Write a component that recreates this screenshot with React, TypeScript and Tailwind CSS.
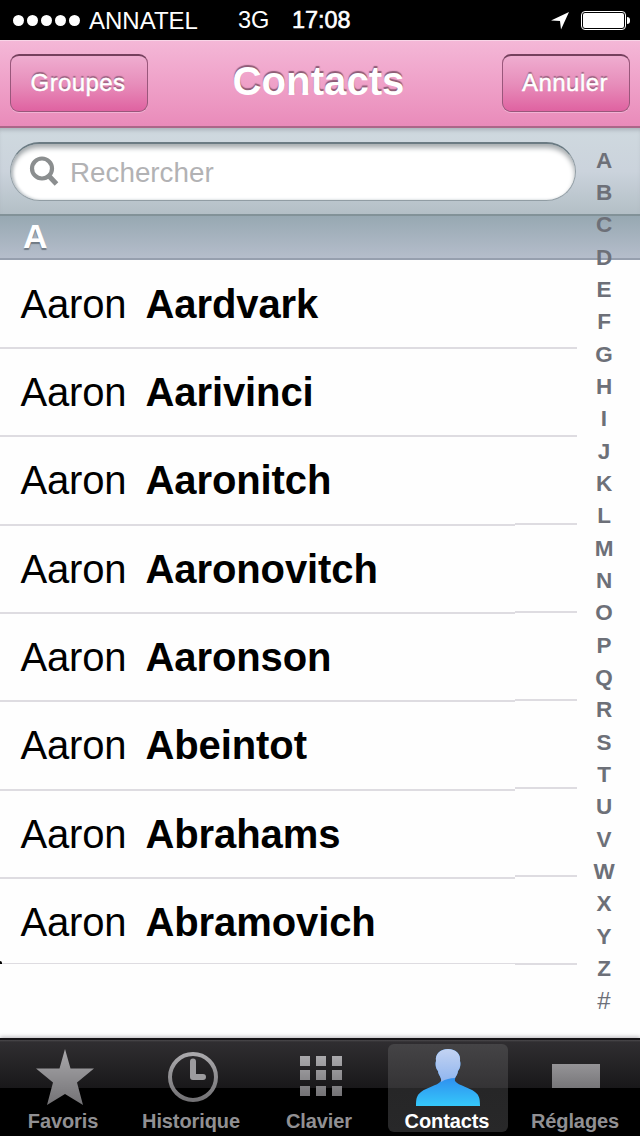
import { useState } from 'react';
import type { ReactNode } from 'react';

const CONTACTS = [
  'Aardvark',
  'Aarivinci',
  'Aaronitch',
  'Aaronovitch',
  'Aaronson',
  'Abeintot',
  'Abrahams',
  'Abramovich',
];

const INDEX = 'ABCDEFGHIJKLMNOPQRSTUVWXYZ#'.split('');

function StatusBar() {
  return (
    <div className="flex h-10 shrink-0 items-center bg-black pl-[13px] pr-[10px] text-[24px] text-white">
      <div className="flex gap-[3px]">
        {[0, 1, 2, 3, 4].map(i => (
          <span key={i} className="h-[11px] w-[11px] rounded-full bg-white" />
        ))}
      </div>
      <span className="ml-[9px] w-[149px] pt-[2px]">ANNATEL</span>
      <span className="w-[54px] pt-[2px] text-[23.6px]">3G</span>
      <span className="pt-[2px] text-[23.4px] [-webkit-text-stroke:0.6px_white]">17:08</span>
      <svg className="ml-auto" width="20" height="20" viewBox="0 0 20 20">
        <path d="M1 10.5 19 2 11 19.5 10 11Z" fill="#fff" />
      </svg>
      <div className="ml-[11px] flex items-center gap-[1px]">
        <div className="h-[19px] w-[45px] rounded-[4px] border border-white p-[1px]">
          <div className="h-full w-full rounded-[2px] bg-white" />
        </div>
        <span className="h-[7px] w-[3px] rounded-r-full bg-white" />
      </div>
    </div>
  );
}

function BarButton({ className, children }: { className: string; children: ReactNode }) {
  return (
    <button
      className={`h-[58px] rounded-[9px] border border-[#99577b] border-t-2 border-t-[#75405d] bg-linear-to-b from-[#efadd0] via-[#e78ebb] to-[#df62a1] pr-[2px] pb-[1px] text-[24px] text-white [-webkit-text-stroke:0.5px_white] [text-shadow:0_-2px_1px_#95617d] shadow-[0_1px_0_#f1b2d3] ${className}`}
    >
      {children}
    </button>
  );
}

function NavBar() {
  return (
    <header className="flex h-[88px] shrink-0 items-center justify-between border-t border-b-2 border-t-[#f8d5e7] border-b-[#ac6689] bg-linear-to-b from-[#f4b7d7] to-[#e98bba] px-[10px] pb-[1px]">
      <BarButton className="w-[138px] tracking-[0.4px]">Groupes</BarButton>
      <h1 className="ml-[-13px] pb-[1px] text-[40.2px] leading-none font-bold text-white [text-shadow:0_-2px_1px_#8e5c76]">
        Contacts
      </h1>
      <BarButton className="w-[128px] tracking-[0.5px]">Annuler</BarButton>
    </header>
  );
}

function SearchBar() {
  return (
    <div className="h-[88px] shrink-0 border-b-2 border-[#829298] bg-linear-to-b from-[#cfd9df] via-[#cbd3dc] to-[#b3bfc6] pt-[14px] pl-[10px] shadow-[inset_0_4px_4px_-2px_#a9b0b8]">
      <div className="flex h-[59px] w-[566px] items-center rounded-full border border-t-2 border-[#919da4] border-t-[#6b7b83] bg-white pl-[18px] shadow-[inset_0_4px_5px_#a9aeb1,inset_2px_0_3px_#c5cbd0]">
        <svg width="30" height="32" viewBox="0 0 30 32" fill="none" stroke="#8b8e8f">
          <circle cx="13" cy="12.5" r="10" strokeWidth="4.2" />
          <path d="M19.5 19.5 27.5 28" strokeWidth="5" />
        </svg>
        <span className="ml-[11px] pt-[1px] text-[27.8px] text-[#b2b2b4]">Rechercher</span>
      </div>
    </div>
  );
}

function ContactList() {
  return (
    <main className="flex flex-1 bg-[#fefefe]">
      <ul className="w-[515px] pt-[0.5px]">
        {CONTACTS.map((name, i) => (
          <li
            key={name}
            className={`flex items-center border-[#dedce1] pl-[20.5px] text-[40px] leading-none text-black ${
              i === CONTACTS.length - 1 ? 'h-[85.5px] border-b pt-[2px]' : 'h-[88.35px] border-b-2'
            }`}
          >
            <span className="w-[125px] tracking-[-0.2px]">Aaron</span>
            <span className="font-bold tracking-[-0.1px]">{name}</span>
          </li>
        ))}
      </ul>
      <div className="w-[62px] pt-[1px]">
        {CONTACTS.map(name => (
          <div key={name} className="h-[88px] border-b-2 border-[#dedce1]" />
        ))}
      </div>
    </main>
  );
}

function StarIcon() {
  return (
    <svg className="ml-[2px]" width="60" height="60" viewBox="0 0 60 60">
      <path d="M30 2 35.5 21.5H59L42 35.5 48 58 30 47 12 58 18 35.5 1 21.5H24.5Z" fill="url(#grey)" />
    </svg>
  );
}

function ClockIcon() {
  return (
    <svg className="ml-[2px]" width="50" height="50" viewBox="0 0 50 50" fill="none">
      <circle cx="25" cy="25" r="23" strokeWidth="4" stroke="url(#grey)" />
      <path d="M25 9.5V25H35" strokeWidth="6" stroke="#9c9b9e" strokeLinecap="round" strokeLinejoin="round" />
    </svg>
  );
}

function KeypadIcon() {
  return (
    <svg className="mb-[2px] ml-[2px]" width="42" height="40" viewBox="0 0 42 40" fill="url(#grey)">
      <path d="M0 0h10v10H0zM16 0h10v10H16zM32 0h10v10H32zM0 14h10v10H0zM16 14h10v10H16zM32 14h10v10H32zM0 30h10v10H0zM16 30h10v10H16zM32 30h10v10H32z" />
    </svg>
  );
}

function PersonIcon() {
  return (
    <svg width="64" height="57" viewBox="0 0 64 57">
      <path
        d="M32 0C24 0 19 5 20 12C19 15 20 20 22 22C22.500 27 26 28 25 32C21 37 11 38 5 43C1 46 0 49 0 57H64C64 49 63 46 59 43C53 38 43 37 39 32C38.500 28 41 27 42 22C44 20 45 15 44 12C45 5 40 0 32 0Z"
        fill="url(#body)"
      />
      <path
        d="M32 0C24 0 19 5 20 12C19 15 20 20 22 22C22.500 27 26 28 25 33C30 30 34 29 39 29C40 27 41.500 26 42 22C44 20 45 15 44 12C45 5 40 0 32 0Z"
        fill="url(#head)"
      />
    </svg>
  );
}

const TABS = [
  { label: 'Favoris', icon: <StarIcon /> },
  { label: 'Historique', icon: <ClockIcon /> },
  { label: 'Clavier', icon: <KeypadIcon /> },
  { label: 'Contacts', icon: <PersonIcon /> },
  { label: 'Réglages', icon: <div className="mb-[2px] h-6 w-12 bg-linear-to-b from-[#959497] to-[#777679]" /> },
];

function TabBar() {
  const [active, setActive] = useState('Contacts');

  return (
    <nav className="flex h-[98px] shrink-0 justify-center border-t-2 border-[#151316] bg-[linear-gradient(#4b494c_0px,#302e31_2px,#19181a_48px,#000_48px)] shadow-[0_-1px_4px_#b5b3b8]">
      {TABS.map(({ label, icon }) => (
        <button
          key={label}
          onClick={() => setActive(label)}
          className="flex h-24 w-[128px] flex-col items-center pt-[4px]"
        >
          <span
            className={`flex h-[88px] w-[120px] flex-col items-center rounded-[6px] text-[20px] leading-none font-bold ${
              active === label
                ? 'bg-[linear-gradient(#454446_0px,#343335_44px,#262627_44px,#282829_100%)] text-white'
                : 'text-[#919093]'
            }`}
          >
            <span className="flex h-[66px] items-center justify-center">{icon}</span>
            <span className="pt-[1px] pr-[2px] tracking-[-0.1px] whitespace-nowrap">{label}</span>
          </span>
        </button>
      ))}
    </nav>
  );
}

export default function App() {
  return (
    <div className="relative flex h-[1136px] w-[640px] flex-col overflow-hidden bg-white font-['Liberation_Sans',Arial,sans-serif]">
      {/* Shared icon gradients */}
      <svg className="absolute h-0 w-0" aria-hidden="true">
        <defs>
          <linearGradient id="grey" x1="0" y1="0" x2="0" y2="1">
            <stop offset="0" stopColor="#aaa9ac" />
            <stop offset="1" stopColor="#737275" />
          </linearGradient>
          <linearGradient id="head" x1="0" y1="0" x2="0" y2="1">
            <stop offset="0" stopColor="#c3d3f2" />
            <stop offset="1" stopColor="#8fb5ef" />
          </linearGradient>
          <linearGradient id="body" x1="0" y1="0" x2="0" y2="1">
            <stop offset="0.5" stopColor="#2f8fef" />
            <stop offset="1" stopColor="#35c8fa" />
          </linearGradient>
        </defs>
      </svg>

      <StatusBar />
      <NavBar />
      <SearchBar />
      <h2 className="h-11 shrink-0 border-b-2 border-[#969fae] bg-linear-to-b from-[#97a8b2] to-[#b5bdcb] pl-[23px] text-[34px] leading-[41px] font-bold text-white [text-shadow:0_2px_1px_#707a84]">
        A
      </h2>
      <ContactList />
      <TabBar />

      {/* Letter index floats over the search bar and the list */}
      <div className="absolute top-[144.5px] right-[21px] flex w-[30px] flex-col items-center text-[22.5px] font-bold text-[#6d7078]">
        {INDEX.map(letter => (
          <span
            key={letter}
            className={`h-[32.35px] leading-[32.35px] ${letter === '#' ? 'text-[24px] font-normal' : ''}`}
          >
            {letter}
          </span>
        ))}
      </div>

      {/* Dark nick at the left edge under the last row */}
      <span className="absolute top-[961px] left-0 h-[3px] w-[2px] rounded-tr-full bg-black" />
    </div>
  );
}
